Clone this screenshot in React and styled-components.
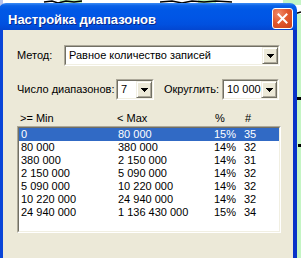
import React from "react";
import styled, { createGlobalStyle } from "styled-components";

const GlobalStyle = createGlobalStyle`
  html, body {
    margin: 0;
    padding: 0;
    background: #fff;
  }
  body {
    width: 301px;
    height: 258px;
    overflow: hidden;
  }
`;

const Desktop = styled.div`
  position: relative;
  width: 301px;
  height: 258px;
  overflow: hidden;
  background: #fff;
`;

const MapLayer = styled.svg`
  position: absolute;
  left: 0;
  top: 0;
`;

const Window = styled.div`
  position: absolute;
  left: -1px;
  top: 3px;
  width: 298px;
  height: 272px;
  display: flex;
  flex-direction: column;
  font-family: "Liberation Sans", Arial, sans-serif;
  color: #000;
`;

const TitleBar = styled.div`
  flex: none;
  height: 27px;
  box-sizing: border-box;
  display: flex;
  align-items: flex-start;
  justify-content: space-between;
  padding: 5px 4px 0 9px;
  border-radius: 7px 7px 0 0;
  background: linear-gradient(
    to bottom,
    #3b8cf5 0%,
    #0a61e8 10%,
    #0058e6 25%,
    #0055e5 55%,
    #0150df 80%,
    #0346d0 100%
  );
`;

const Title = styled.span`
  font-size: 13px;
  font-weight: bold;
  line-height: 21px;
  padding-top: 1px;
  color: #fff;
  text-shadow: 1px 1px 0 #0b2a8c;
  white-space: nowrap;
`;

const CloseButton = styled.div`
  width: 21px;
  height: 21px;
  box-sizing: border-box;
  border: 1px solid #fff;
  border-radius: 3px;
  background: radial-gradient(
    circle at 30% 25%,
    #f08a6a 0%,
    #e2582f 45%,
    #c8401a 100%
  );
  display: flex;
  align-items: center;
  justify-content: center;
`;

const Frame = styled.div`
  flex: 1;
  background: #ece9d8;
  border-left: 4px solid #0a45d8;
  border-right: 4px solid #0733c8;
  padding: 15px 0 0 14px;
  display: flex;
  flex-direction: column;
  font-size: 11px;
`;

const FieldRow = styled.div`
  display: flex;
  align-items: center;
  height: 21px;
  margin-top: ${(p) => p.$gap || 0}px;
`;

const Label = styled.span`
  flex: none;
  width: ${(p) => p.$width}px;
  margin-left: ${(p) => p.$offset || 0}px;
  white-space: nowrap;
  line-height: 13px;
`;

const Combo = styled.div`
  flex: none;
  width: ${(p) => p.$width}px;
  height: 21px;
  box-sizing: border-box;
  border: 1px solid;
  border-color: #aca899 #fff #fff #aca899;
  background: #fff;
`;

const ComboInner = styled.div`
  height: 100%;
  box-sizing: border-box;
  border: 1px solid;
  border-color: #716f64 #f1efe2 #f1efe2 #716f64;
  display: flex;
  align-items: center;
`;

const ComboValue = styled.span`
  flex: 1;
  padding-left: 3px;
  white-space: nowrap;
  overflow: hidden;
  line-height: 13px;
`;

const DropButton = styled.div`
  flex: none;
  width: 16px;
  height: 17px;
  box-sizing: border-box;
  background: #ece9d8;
  border: 1px solid;
  border-color: #f1efe2 #716f64 #716f64 #f1efe2;
  box-shadow: inset 1px 1px 0 #fff, inset -1px -1px 0 #aca899;
  display: flex;
  align-items: center;
  justify-content: center;
`;

const Columns = styled.div`
  display: grid;
  grid-template-columns: 97px 96px 30px 37px;
  height: 13px;
  line-height: 13px;
  white-space: nowrap;
`;

const HeaderRow = styled(Columns)`
  margin: 12px 0 0 2px;
`;

const HeaderCell = styled.span`
  padding-left: ${(p) => p.$pad}px;
`;

const ListBox = styled.div`
  margin-top: 1px;
  width: 264px;
  height: 107px;
  box-sizing: border-box;
  border: 1px solid;
  border-color: #aca899 #fff #fff #aca899;
  background: #fff;
`;

const ListInner = styled.div`
  height: 100%;
  box-sizing: border-box;
  border: 1px solid;
  border-color: #716f64 #f1efe2 #f1efe2 #716f64;
`;

const ListRow = styled(Columns)`
  width: 260px;
  background: ${(p) => (p.$selected ? "#316ac5" : "transparent")};
  color: ${(p) => (p.$selected ? "#fff" : "#000")};
`;

const Cell = styled.span`
  padding-left: 2px;
`;

const rows = [
  ["0", "80 000", "15%", "35"],
  ["80 000", "380 000", "14%", "32"],
  ["380 000", "2 150 000", "14%", "31"],
  ["2 150 000", "5 090 000", "14%", "32"],
  ["5 090 000", "10 220 000", "14%", "32"],
  ["10 220 000", "24 940 000", "14%", "32"],
  ["24 940 000", "1 136 430 000", "15%", "34"],
];

function Arrow() {
  return (
    <svg width="7" height="4" viewBox="0 0 7 4" shapeRendering="crispEdges">
      <path d="M0 0h7v1h-1v1h-1v1h-1v1h-1v-1h-1v-1h-1v-1h-1z" fill="#000" />
    </svg>
  );
}

function Select({ width, value }) {
  return (
    <Combo $width={width}>
      <ComboInner>
        <ComboValue>{value}</ComboValue>
        <DropButton>
          <Arrow />
        </DropButton>
      </ComboInner>
    </Combo>
  );
}

function MapBackground() {
  return (
    <MapLayer width="301" height="258" viewBox="0 0 301 258">
      <rect x="0" y="0" width="3" height="8" fill="#b4c2ee" />
      <rect x="294" y="14" width="7" height="244" fill="#c4f5c4" />
      <path d="M283 0h18v5h-18z" fill="#c4f5c4" />
      <path d="M60 0h22v3h-22z" fill="#b8f0b2" />
      <path d="M198 0h18v3h-18z" fill="#b8f0b2" />
      <path
        d="M44 2 L52 1 L58 3 L66 1 L74 2 L82 1"
        stroke="#000"
        strokeWidth="1.5"
        fill="none"
      />
      <path
        d="M160 2 L172 1 L182 3 L192 1 L204 2 L216 1 L232 2"
        stroke="#000"
        strokeWidth="1.5"
        fill="none"
      />
      <path d="M294 14 L301 12" stroke="#000" strokeWidth="1.5" />
      <path d="M297 97 h4 v3 h-4z" fill="#000" />
      <path d="M298 144 h3 v3 h-3z" fill="#000" />
    </MapLayer>
  );
}

export default function App() {
  return (
    <>
      <GlobalStyle />
      <Desktop>
        <MapBackground />
        <Window>
          <TitleBar>
            <Title>Настройка диапазонов</Title>
            <CloseButton>
              <svg width="11" height="11" viewBox="0 0 11 11">
                <path
                  d="M1.5 1.5 L9.5 9.5 M9.5 1.5 L1.5 9.5"
                  stroke="#fff"
                  strokeWidth="2"
                  strokeLinecap="square"
                />
              </svg>
            </CloseButton>
          </TitleBar>
          <Frame>
            <FieldRow>
              <Label $width={47}>Метод:</Label>
              <Select width={216} value="Равное количество записей" />
            </FieldRow>
            <FieldRow $gap={13}>
              <Label $width={99}>Число диапазонов:</Label>
              <Select width={38} value="7" />
              <Label $width={58} $offset={10}>
                Округлить:
              </Label>
              <Select width={57} value="10 000" />
            </FieldRow>
            <HeaderRow>
              <HeaderCell $pad={1}>&gt;= Min</HeaderCell>
              <HeaderCell $pad={1}>&lt; Max</HeaderCell>
              <HeaderCell $pad={3}>%</HeaderCell>
              <HeaderCell $pad={3}>#</HeaderCell>
            </HeaderRow>
            <ListBox>
              <ListInner>
                {rows.map((r, i) => (
                  <ListRow key={i} $selected={i === 0}>
                    {r.map((c, j) => (
                      <Cell key={j}>{c}</Cell>
                    ))}
                  </ListRow>
                ))}
              </ListInner>
            </ListBox>
          </Frame>
        </Window>
      </Desktop>
    </>
  );
}
